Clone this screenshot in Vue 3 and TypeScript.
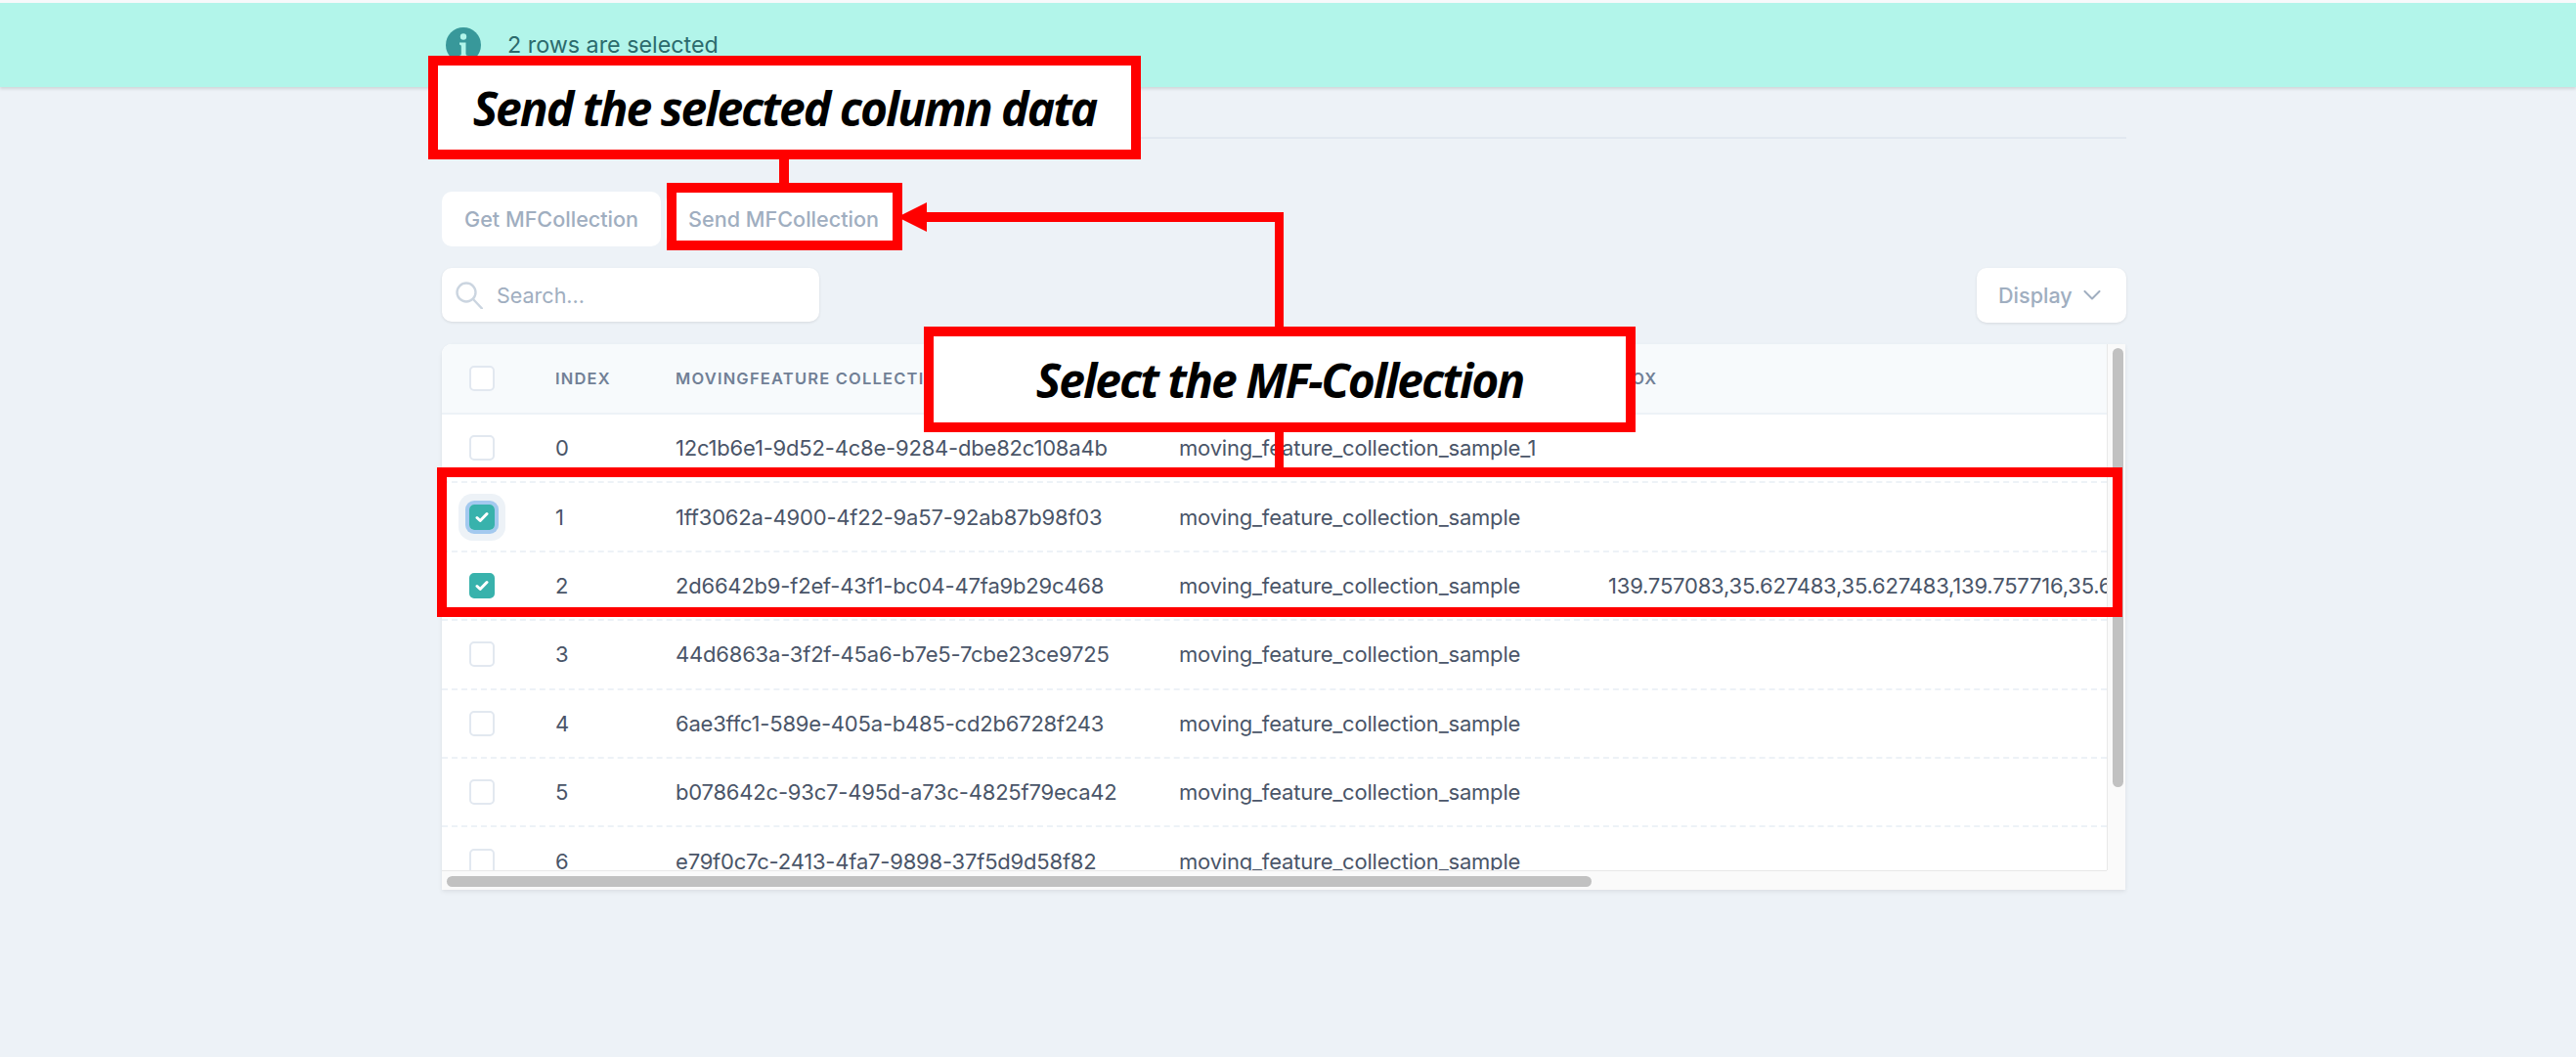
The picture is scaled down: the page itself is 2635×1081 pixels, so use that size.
<template>
  <div class="page">
    <div class="banner">
      <svg class="info-icon" viewBox="0 0 36 36">
        <circle cx="18" cy="18" r="18" fill="#38989a" />
        <circle cx="18" cy="9.5" r="3.2" fill="#b2f5ea" />
        <path d="M14 15.5h6.5v11.5c0 1.4.8 1.8 2 1.8v2.2h-8.5v-2.2c1.2 0 1.8-.5 1.8-1.8v-7.5c0-1.3-.6-1.8-1.8-1.8z" fill="#b2f5ea" />
      </svg>
      <span class="banner-text">2 rows are selected</span>
    </div>

    <div class="content">
      <div class="rule"></div>

      <div class="actions">
        <button class="btn">Get MFCollection</button>
        <button class="btn">Send MFCollection</button>
      </div>

      <div class="toolbar">
        <div class="search">
          <svg class="search-icon" viewBox="0 0 28 28">
            <circle cx="11" cy="11" r="9.5" fill="none" stroke="#cbd5e0" stroke-width="2.4" />
            <path d="M18 18l9 9.5" stroke="#cbd5e0" stroke-width="2.4" stroke-linecap="round" />
          </svg>
          <span class="placeholder">Search...</span>
        </div>
        <button class="btn display-btn">
          Display
          <svg class="chevron" viewBox="0 0 18 10">
            <path d="M1.5 1l7.5 7.5L16.500 1" fill="none" stroke="#a0aec0" stroke-width="2" stroke-linecap="round" stroke-linejoin="round" />
          </svg>
        </button>
      </div>

      <div class="card">
        <div class="viewport">
          <div class="row head">
            <div class="cell"><span class="check"></span></div>
            <div class="cell">INDEX</div>
            <div class="cell">MOVINGFEATURE COLLECTION ID</div>
            <div class="cell">MOVINGFEATURE COLLECTION NAME</div>
            <div class="cell">BBOX</div>
          </div>
          <div v-for="(item, i) in rows" :key="item.id" class="row">
            <div class="cell">
              <span class="check-wrap" :class="{ focused: i === 1 }">
                <span class="check" :class="{ checked: item.selected }">
                  <svg v-if="item.selected" viewBox="0 0 14 12" class="tick">
                    <path d="M2 6.500l3.200 3L12 2.500" fill="none" stroke="#fff" stroke-width="3" stroke-linecap="round" stroke-linejoin="round" />
                  </svg>
                </span>
              </span>
            </div>
            <div class="cell">{{ i }}</div>
            <div class="cell">{{ item.id }}</div>
            <div class="cell">{{ item.name }}</div>
            <div class="cell">{{ item.bbox }}</div>
          </div>
        </div>
        <div class="track-y"><div class="thumb-y"></div></div>
        <div class="track-x"><div class="thumb-x"></div></div>
        <div class="corner"></div>
      </div>
    </div>

    <!-- annotations drawn over the screenshot -->
    <div class="note note-send">Send the selected column data</div>
    <div class="note note-select">Select the MF-Collection</div>
    <div class="frame frame-send"></div>
    <div class="frame frame-rows"></div>
    <svg class="arrows" viewBox="0 0 2635 1081">
      <path d="M797 163h10v24h-10z" fill="#f00" />
      <path d="M1304 442h9v36h-9z" fill="#f00" />
      <path d="M1304 217h9v117h-9z" fill="#f00" />
      <path d="M948 217h365v10H948z" fill="#f00" />
      <path d="M918 222l30-15v30z" fill="#f00" />
    </svg>
  </div>
</template>

<script setup lang="ts">
interface Collection {
  id: string;
  name: string;
  bbox: string;
  selected: boolean;
}

const sample = 'moving_feature_collection_sample';

const rows: Collection[] = [
  { id: '12c1b6e1-9d52-4c8e-9284-dbe82c108a4b', name: 'moving_feature_collection_sample_1', bbox: '', selected: false },
  { id: '1ff3062a-4900-4f22-9a57-92ab87b98f03', name: sample, bbox: '', selected: true },
  {
    id: '2d6642b9-f2ef-43f1-bc04-47fa9b29c468',
    name: sample,
    bbox: '139.757083,35.627483,35.627483,139.757716,35.627483,35.627483',
    selected: true,
  },
  { id: '44d6863a-3f2f-45a6-b7e5-7cbe23ce9725', name: sample, bbox: '', selected: false },
  { id: '6ae3ffc1-589e-405a-b485-cd2b6728f243', name: sample, bbox: '', selected: false },
  { id: 'b078642c-93c7-495d-a73c-4825f79eca42', name: sample, bbox: '', selected: false },
  { id: 'e79f0c7c-2413-4fa7-9898-37f5d9d58f82', name: sample, bbox: '', selected: false },
];
</script>

<style>
html,
body {
  margin: 0;
  background: #edf2f7;
}
</style>

<style scoped>
.page {
  position: relative;
  width: 2635px;
  height: 1081px;
  overflow: hidden;
  box-sizing: border-box;
  padding-top: 3px;
  background: #edf2f7;
  font-family: Inter, 'Liberation Sans', sans-serif;
  color: #4a5568;
  box-shadow: inset 0 3px 0 #f7f9fb;
}

.banner {
  display: flex;
  align-items: center;
  height: 86px;
  padding-left: 456px;
  background: #b2f5ea;
  box-shadow: 0 2px 3px rgba(0, 0, 0, 0.12);
}

.info-icon {
  width: 36px;
  height: 36px;
  flex: none;
}

.banner-text {
  margin-left: 27px;
  margin-top: -2px;
  font-size: 23.3px;
  color: #2c6b6d;
}

.content {
  width: 1723px;
  margin-left: 452px;
}

.rule {
  margin-top: 51px;
  border-top: 2px solid #e2e8f0;
}

.actions {
  display: flex;
  gap: 5px;
  margin-top: 54px;
}

.btn {
  display: flex;
  align-items: center;
  height: 56px;
  padding: 0 23px;
  border: 0;
  border-radius: 10px;
  background: #fff;
  font-family: inherit;
  font-size: 21.6px;
  font-weight: 500;
  color: #a0aec0;
}

.toolbar {
  display: flex;
  justify-content: space-between;
  margin-top: 22px;
}

.search {
  display: flex;
  align-items: center;
  width: 386px;
  height: 55px;
  box-sizing: border-box;
  padding-left: 14px;
  border-radius: 10px;
  background: #fff;
  box-shadow: 0 1px 3px rgba(0, 0, 0, 0.1);
}

.search-icon {
  width: 28px;
  height: 28px;
  flex: none;
}

.placeholder {
  margin-left: 14px;
  font-size: 21.5px;
  color: #a0aec0;
}

.display-btn {
  width: 153px;
  box-sizing: border-box;
  padding: 0 26px 0 22px;
  box-shadow: 0 1px 3px rgba(0, 0, 0, 0.1);
  justify-content: space-between;
}

.chevron {
  width: 18px;
  height: 10px;
}

.card {
  display: grid;
  grid-template-columns: 1703px 19px;
  grid-template-rows: 538px 20px;
  width: 1722px;
  margin-top: 22px;
  border-radius: 10px 0 0 0;
  overflow: hidden;
  background: #fafafa;
  box-shadow: 0 2px 4px rgba(0, 0, 0, 0.08);
}

.viewport {
  overflow: hidden;
  background: #fff;
}

.row {
  display: grid;
  grid-template-columns: 115px 123px 515px 439px 900px;
  align-items: center;
  height: 70.4px;
  box-sizing: border-box;
  border-bottom: 2px dashed #edf2f7;
  font-size: 22px;
  letter-spacing: -0.2px;
  white-space: nowrap;
}

.head {
  height: 72px;
  background: #f7fafc;
  border-bottom: 2px solid #edf2f7;
  font-size: 16.5px;
  font-weight: 600;
  letter-spacing: 1.2px;
  color: #718096;
}

.cell {
  overflow: hidden;
}

.cell:first-child {
  display: flex;
  overflow: visible;
  padding-left: 28px;
}

.cell:nth-child(n + 2) {
  padding-left: 1px;
}

.check-wrap {
  display: flex;
  border-radius: 5px;
}

.focused {
  box-shadow: 0 0 0 4px #a3c9ef, 0 0 0 11px #edf2f7;
}

.check {
  display: flex;
  align-items: center;
  justify-content: center;
  width: 26px;
  height: 26px;
  box-sizing: border-box;
  border: 2px solid #e2e8f0;
  border-radius: 5px;
  background: #fff;
}

.checked {
  border-color: #38b2ac;
  background: #38b2ac;
}

.tick {
  width: 14px;
  height: 12px;
}

.track-y {
  grid-column: 2;
  grid-row: 1;
  border-left: 1px solid #e8e8e8;
  padding: 4px 3px 0 5px;
}

.thumb-y {
  width: 11px;
  height: 449px;
  border-radius: 6px;
  background: #c1c1c1;
}

.track-x {
  grid-column: 1;
  grid-row: 2;
  border-top: 1px solid #e8e8e8;
  padding: 5px 0 0 5px;
}

.thumb-x {
  width: 1171px;
  height: 11px;
  border-radius: 6px;
  background: #c1c1c1;
}

.corner {
  grid-column: 2;
  grid-row: 2;
}

.note {
  position: absolute;
  display: flex;
  align-items: center;
  justify-content: center;
  box-sizing: border-box;
  border: 10px solid #f00;
  background: #fff;
  font-family: 'Open Sans', sans-serif;
  font-style: italic;
  font-weight: 700;
  font-size: 48px;
  letter-spacing: -2px;
  color: #000;
  white-space: nowrap;
}

.note-send {
  left: 438px;
  top: 57px;
  width: 729px;
  height: 106px;
}

.note-select {
  left: 945px;
  top: 334px;
  width: 728px;
  height: 108px;
}

.frame {
  position: absolute;
  box-sizing: border-box;
  border: 10px solid #f00;
  pointer-events: none;
}

.frame-send {
  left: 682px;
  top: 187px;
  width: 241px;
  height: 69px;
}

.frame-rows {
  left: 447px;
  top: 478px;
  width: 1724px;
  height: 153px;
}

.arrows {
  position: absolute;
  left: 0;
  top: 0;
  width: 2635px;
  height: 1081px;
  pointer-events: none;
}
</style>
